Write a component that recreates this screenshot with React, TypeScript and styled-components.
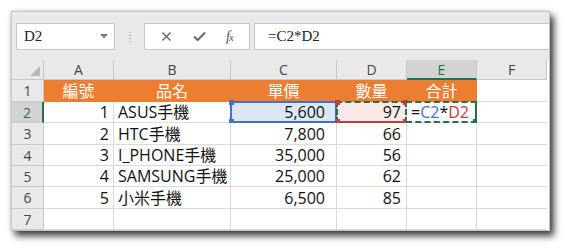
import React from "react";
import styled, { createGlobalStyle, css } from "styled-components";

const Global = createGlobalStyle`
  html, body { margin: 0; padding: 0; background: #ffffff; }
  body { font-family: "Open Sans", "Noto Sans CJK TC", sans-serif; }
`;

const Page = styled.div`
  width: 567px;
  height: 250px;
  padding: 11px 0 0 11px;
  box-sizing: border-box;
  background: #ffffff;
`;

const Window = styled.div`
  width: 537px;
  border: 1px solid #c4c4c4;
  background: #e9e9e9;
  box-shadow: 4px 5px 7px rgba(0, 0, 0, 0.75), 0 0 4px rgba(0, 0, 0, 0.18);
  display: flex;
  flex-direction: column;
`;

const FormulaBar = styled.div`
  display: flex;
  align-items: center;
  height: 27px;
  margin: 11px 0 10px 0;
  padding-left: 4px;
`;

const Box = styled.div<{ $w?: number; $grow?: boolean }>`
  height: 27px;
  box-sizing: border-box;
  border: 1px solid #c6c6c6;
  background: #ffffff;
  display: flex;
  align-items: center;
  ${(p) => (p.$w ? css`width: ${p.$w}px;` : "")}
  ${(p) => (p.$grow ? css`flex: 1; border-right: none;` : "")}
`;

const NameBox = styled(Box)`
  justify-content: space-between;
  padding: 0 6px 0 7px;
  font-family: "Liberation Serif", "Noto Sans CJK TC", serif;
  font-size: 15px;
  color: #222;
`;

const Separator = styled.div`
  width: 29px;
  display: flex;
  flex-direction: column;
  align-items: center;
  gap: 2px;
  span {
    width: 2px;
    height: 1px;
    background: #b4b4b4;
  }
`;

const ButtonBox = styled(Box)`
  justify-content: space-around;
  padding: 0 6px;
  margin-right: 4px;
`;

const Fx = styled.span`
  font-family: "Liberation Serif", serif;
  font-style: italic;
  font-size: 14px;
  color: #555;
  letter-spacing: -1px;
  sub {
    font-size: 11px;
    vertical-align: baseline;
  }
`;

const FormulaInput = styled(Box)`
  padding-left: 13px;
  font-family: "Liberation Serif", "Noto Sans CJK TC", serif;
  font-size: 15px;
  color: #222;
`;

const Sheet = styled.div`
  display: grid;
  grid-template-columns: 32px 70px 117px 106px 70px 70px 70px;
  grid-template-rows: 20px 22px 21px 22px 21px 21px 22px 21px;
  background: #ffffff;
`;

const ColHead = styled.div<{ $active?: boolean }>`
  box-sizing: border-box;
  background: ${(p) => (p.$active ? "#d3d3d3" : "#e9e9e9")};
  border-right: 1px solid #c8c8c8;
  border-bottom: ${(p) => (p.$active ? "2px solid #217346" : "1px solid #c8c8c8")};
  color: ${(p) => (p.$active ? "#217346" : "#444")};
  font-size: 14px;
  display: flex;
  align-items: center;
  justify-content: center;
  &:last-child { border-right: none; }
`;

const Corner = styled(ColHead)`
  position: relative;
  &::after {
    content: "";
    position: absolute;
    right: 3px;
    bottom: 3px;
    width: 0;
    height: 0;
    border-left: 10px solid transparent;
    border-bottom: 10px solid #b8b8b8;
  }
`;

const RowHead = styled.div<{ $active?: boolean }>`
  box-sizing: border-box;
  background: ${(p) => (p.$active ? "#d3d3d3" : "#e9e9e9")};
  border-right: ${(p) => (p.$active ? "2px solid #217346" : "1px solid #c8c8c8")};
  border-bottom: 1px solid #c8c8c8;
  color: ${(p) => (p.$active ? "#217346" : "#444")};
  font-size: 14px;
  display: flex;
  align-items: center;
  justify-content: center;
`;

const Cell = styled.div<{
  $align?: "left" | "right" | "center";
  $pad?: number;
  $bg?: string;
  $color?: string;
}>`
  position: relative;
  box-sizing: border-box;
  border-right: 1px solid #dadada;
  border-bottom: 1px solid #dadada;
  background: ${(p) => p.$bg || "#ffffff"};
  color: ${(p) => p.$color || "#111"};
  font-size: 16px;
  line-height: 1;
  display: flex;
  align-items: center;
  white-space: nowrap;
  justify-content: ${(p) =>
    p.$align === "right" ? "flex-end" : p.$align === "center" ? "center" : "flex-start"};
  padding: 0 ${(p) => (p.$align === "right" ? p.$pad ?? 4 : 3)}px 0
    ${(p) => (p.$align === "left" ? 4 : 3)}px;
  &:nth-child(7n) { border-right: none; }
`;

const TitleCell = styled(Cell)`
  background: #ed7d31;
  color: #ffffff;
  border-bottom-color: #ed7d31;
  border-right-color: #ed7d31;
`;

const Frame = styled.div<{
  $top: string;
  $right: string;
  $bottom: string;
  $left: string;
}>`
  position: absolute;
  top: -1px;
  left: -1px;
  right: -1px;
  bottom: -1px;
  border-top: ${(p) => p.$top};
  border-right: ${(p) => p.$right};
  border-bottom: ${(p) => p.$bottom};
  border-left: ${(p) => p.$left};
  pointer-events: none;
`;

const Handle = styled.span<{ $color: string; $pos: "tl" | "tr" | "bl" | "br" }>`
  position: absolute;
  width: 5px;
  height: 5px;
  background: ${(p) => p.$color};
  ${(p) => (p.$pos[0] === "t" ? "top: -3px;" : "bottom: -3px;")}
  ${(p) => (p.$pos[1] === "l" ? "left: -3px;" : "right: -3px;")}
`;

const Ref = styled.span<{ $c: string }>`
  color: ${(p) => p.$c};
`;

const GREEN = "#217346";
const BLUE = "#3f72c9";
const RED = "#c43a3f";

const CancelIcon = () => (
  <svg width="11" height="11" viewBox="0 0 11 11">
    <path d="M1.5 1.5 L9.5 9.5 M9.5 1.5 L1.5 9.5" stroke="#6a6a6a" strokeWidth="1.5" fill="none" />
  </svg>
);

const CheckIcon = () => (
  <svg width="13" height="11" viewBox="0 0 13 11">
    <path d="M1 5.5 L4.8 9 L12 1.5" stroke="#6a6a6a" strokeWidth="2" fill="none" />
  </svg>
);

const DropArrow = () => (
  <svg width="8" height="5" viewBox="0 0 8 5">
    <path d="M0 0 H8 L4 4.5 Z" fill="#7a7a7a" />
  </svg>
);

type Row = { n: number; name: string; price: string; qty: string };
const rows: Row[] = [
  { n: 1, name: "ASUS手機", price: "5,600", qty: "97" },
  { n: 2, name: "HTC手機", price: "7,800", qty: "66" },
  { n: 3, name: "I_PHONE手機", price: "35,000", qty: "56" },
  { n: 4, name: "SAMSUNG手機", price: "25,000", qty: "62" },
  { n: 5, name: "小米手機", price: "6,500", qty: "85" },
];

export default function App() {
  return (
    <Page>
      <Global />
      <Window>
        <FormulaBar>
          <NameBox $w={99}>
            <span>D2</span>
            <DropArrow />
          </NameBox>
          <Separator>
            <span />
            <span />
            <span />
            <span />
          </Separator>
          <ButtonBox $w={106}>
            <CancelIcon />
            <CheckIcon />
            <Fx>
              f<sub>x</sub>
            </Fx>
          </ButtonBox>
          <FormulaInput $grow>=C2*D2</FormulaInput>
        </FormulaBar>
        <Sheet>
          <Corner />
          <ColHead>A</ColHead>
          <ColHead>B</ColHead>
          <ColHead>C</ColHead>
          <ColHead>D</ColHead>
          <ColHead $active>E</ColHead>
          <ColHead>F</ColHead>

          <RowHead>1</RowHead>
          <TitleCell $align="center">編號</TitleCell>
          <TitleCell $align="center">品名</TitleCell>
          <TitleCell $align="center">單價</TitleCell>
          <TitleCell $align="center">數量</TitleCell>
          <TitleCell $align="center">合計</TitleCell>
          <Cell />

          {rows.map((r) => (
            <React.Fragment key={r.n}>
              <RowHead $active={r.n === 1}>{r.n + 1}</RowHead>
              <Cell $align="right">{r.n}</Cell>
              <Cell $align="left">{r.name}</Cell>
              <Cell $align="right" $pad={11} $bg={r.n === 1 ? "#dde6f4" : undefined}>
                {r.price}
                {r.n === 1 && (
                  <Frame
                    $top={`2px solid ${BLUE}`}
                    $right={`2px solid ${BLUE}`}
                    $bottom={`2px solid ${BLUE}`}
                    $left={`2px solid ${BLUE}`}
                  >
                    <Handle $color={BLUE} $pos="tl" />
                    <Handle $color={BLUE} $pos="bl" />
                  </Frame>
                )}
              </Cell>
              <Cell $align="right" $pad={5} $bg={r.n === 1 ? "#f9e9e9" : undefined}>
                {r.qty}
                {r.n === 1 && (
                  <Frame
                    $top={`2px dashed ${GREEN}`}
                    $right={`2px dashed ${GREEN}`}
                    $bottom={`2px solid ${RED}`}
                    $left={`2px dashed ${GREEN}`}
                  >
                    <Handle $color={RED} $pos="tl" />
                    <Handle $color={RED} $pos="tr" />
                    <Handle $color={RED} $pos="bl" />
                    <Handle $color={RED} $pos="br" />
                  </Frame>
                )}
              </Cell>
              <Cell $align="left">
                {r.n === 1 && (
                  <>
                    =<Ref $c={BLUE}>C2</Ref>*<Ref $c={RED}>D2</Ref>
                    <Frame
                      $top={`2px dashed ${GREEN}`}
                      $right={`2px solid ${GREEN}`}
                      $bottom={`2px dashed ${GREEN}`}
                      $left="none"
                    >
                      <Handle $color={GREEN} $pos="br" />
                    </Frame>
                  </>
                )}
              </Cell>
              <Cell />
            </React.Fragment>
          ))}

          <RowHead>7</RowHead>
          <Cell />
          <Cell />
          <Cell />
          <Cell />
          <Cell />
          <Cell />
        </Sheet>
      </Window>
    </Page>
  );
}
